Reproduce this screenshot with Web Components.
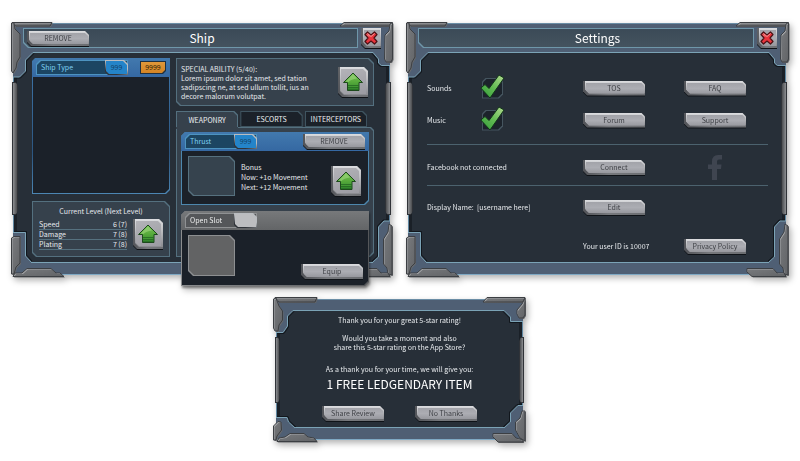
<!DOCTYPE html>
<html lang="en">
<head>
<meta charset="utf-8">
<title>Ship console</title>
<style>
  html { background: #fff; }
  body {
    margin: 0;
    padding: 23px 14px 20px 13px;
    font-family: "Noto Sans CJK JP", "Open Sans", sans-serif;
    font-size: 7px;
    line-height: 9px;
    color: #e6e9ec;
  }
</style>
</head>
<body>
<app-screen></app-screen>

<script>
const base = `
  *, *::before, *::after { box-sizing: border-box; }
  h2, h3, p, dl { margin: 0; font: inherit; }
  button { font: inherit; color: inherit; border: 0; background: none; padding: 0; margin: 0; cursor: pointer; }
`;
const cut = `polygon(var(--tl,0px) 0, calc(100% - var(--tr,0px)) 0, 100% var(--tr,0px), 100% calc(100% - var(--br,0px)), calc(100% - var(--br,0px)) 100%, var(--bl,0px) 100%, 0 calc(100% - var(--bl,0px)), 0 var(--tl,0px))`;

function define(name, css, html) {
  customElements.define(name, class extends HTMLElement {
    constructor() {
      super();
      this.attachShadow({ mode: 'open' }).innerHTML =
        `<style>${base}${css}</style>` + (typeof html === 'function' ? html(this) : html);
    }
  });
}

/* Panel with chamfered corners: --tl --tr --br --bl, --edge, --fill */
define('bevel-panel', `
  :host { display: block; position: relative; isolation: isolate; min-width: 0;
    --tl: 0px; --tr: 0px; --br: 0px; --bl: 0px; --edge: #54707f; --fill: #36414c; }
  :host::before, :host::after { content: ""; position: absolute; z-index: -1; clip-path: ${cut}; }
  :host::before { inset: 0; background: var(--edge); }
  :host::after { inset: 1px; background: var(--fill); }
`, '<slot></slot>');

/* Metal push button; the default slot takes a text or an icon */
define('metal-button', `
  :host { display: block; width: 62px; height: 15px; flex: none; }
  :host([square]) { width: 30px; height: 30px; }
  :host([close]) { width: 20px; height: 20px; }
  button {
    position: relative; isolation: isolate; width: 100%; height: 100%;
    display: grid; place-items: center; color: #3c3e43; white-space: nowrap;
    filter: drop-shadow(0 1px 0 #0f1318);
  }
  .rim, .lit, .face { position: absolute; z-index: -1; clip-path: ${cut}; --tl: 0px; --br: 0px; --tr: 4px; --bl: 4px; }
  .rim { inset: 0; background: linear-gradient(80deg, #505257, #77797d 40%, #6a6c70); }
  .lit { inset: 0 0 2px 2px; background: linear-gradient(#dcdde0, #c6c7ca 30%, #8a8b90); }
  .face { inset: 2px 1px 2px 3px; background: linear-gradient(#a2a3a9, #acadb3 50%, #97989e); --tr: 3px; --bl: 3px; }
  :host([square]) .face { background: linear-gradient(160deg, #b3b3b8, #9b9ba2); inset: 2px 2px 3px 3px; }
  :host([close]) .rim, :host([close]) .lit, :host([close]) .face { --tr: 0px; }
`, el => `<button type="button" aria-label="${el.getAttribute('label') || ''}"><span class="rim"></span><span class="lit"></span><span class="face"></span><slot></slot></button>`
  .replace(' aria-label=""', ''));

define('arrow-icon', `
  :host { display: block; width: 22px; height: 20px; }
  svg { display: block; }
`, `<svg width="22" height="20" viewBox="0 0 22 20">
  <defs><linearGradient id="g" x1="0" y1="0" x2="0" y2="1"><stop offset="0" stop-color="#7ac25a"/><stop offset=".5" stop-color="#58ab3c"/><stop offset="1" stop-color="#2f8a2c"/></linearGradient></defs>
  <path d="M11 1 20.5 10.5H17V18.5H5.500V10.500H1.500Z" fill="url(#g)" stroke="#1d4a1c" stroke-linejoin="round"/>
  <path d="M6 13.500H16.500M6 15.500H16.500M6 17.300H16.500" stroke="#1f5f20" stroke-width=".7"/>
  <path d="M3.500 9.500 11 2.500 15 6.500Q9 7 6.500 10Z" fill="#9ed67f" opacity=".6"/>
</svg>`);

define('close-icon', `
  :host { display: block; width: 14px; height: 14px; }
  svg { display: block; }
`, `<svg width="14" height="14" viewBox="0 0 14 14">
  <path d="M3.500 1 7 4 10.500 1 13 3.500 10 7 13 10.500 10.500 13 7 10 3.500 13 1 10.500 4 7 1 3.500Z" fill="#e8343c" stroke="#4d1216" stroke-width="1.200" stroke-linejoin="round"/>
  <path d="M3.500 2.500 7 5.500 10.500 2.500M3 3.500 5 5.500" fill="none" stroke="#f79a9a" stroke-width="1"/>
</svg>`);

/* Window frame: armoured corners, side rails, optional title bar */
const metal = pts => pts.map(p => `<polygon points="${p}" fill="#a3a5a8"/>
  <polygon points="${p}" fill="url(#m)" transform="translate(1 1)"/><polygon points="${p}" fill="none" stroke="#3c3f43"/>`).join('');
const corner = (cls, line, close, plates) => `<svg class="corner ${cls}" width="1" height="1" aria-hidden="true">
  <defs><linearGradient id="m" x1="0" y1="0" x2="1" y2="1"><stop offset="0" stop-color="#77797c"/><stop offset="1" stop-color="#606265"/></linearGradient></defs>
  <polygon points="${line} ${close}" fill="#4f5f74"/>
  <polyline points="${line}" fill="none" stroke="#11161c" transform="translate(${cls[1] === 'l' ? 1 : -1} ${cls[0] === 't' ? 1 : -1})"/>
  <polyline points="${line}" fill="none" stroke="#7ba3b6"/>
  ${metal(plates)}</svg>`;
const large = [
  corner('tl', '20,29.5 12.500,37 12.500,48 6.500,54 0,54', '0,27 20,27', ['-1,-.5 39,-.5 37,3 3,3', '-1.500,0 1,0 2,6 7,11 7,34 4,39 3,45 0,50 -1.500,48']),
  corner('tr', '-17,29.5 -11.500,36 -11.500,40 -8.500,42.500 0,42.500', '0,27 -17,27', ['-50,3 -46,-.5 2,-.5 0,3', '2.500,-.5 0,1 -1,8 -5,12 -5.500,36 -4,39 1,39 2.500,36']),
  corner('bl', '0,-42.500 12.500,-42.500 12.500,-19 18,-13', '18,-11 0,-11', ['-1.500,-37 1,-38.500 7,-38.500 7,-12 3,-8 1,-1 -1.500,-1', '0,1.500 2,-2 9,-2 14,-6.500 38,-6.500 43,-2 47,-2 51,1.500']),
  corner('br', '0,-54 -6,-54 -11.500,-48 -11.500,-18 -17,-13', '-17,-11 0,-11', ['-1,-51 2,-49 2,0 -2,-1 -3,-7 -6.500,-11 -6.500,-36 -2,-43', '-39,-6.500 -13,-6.500 -9,-2 -2,-2 0,1.500 -34,1.500 -39,-3'])
].join('');
const small = [
  corner('tl', '17,11.500 11.500,17 11.500,27 7,33.500 0,33.500', '0,9 17,9', ['-1,-1.500 41,-1.500 39,3 3,3', '-2.500,0 0,-1 3,7 6.500,12 6.500,21 3,26 2,32 -1,32 -2.500,29']),
  corner('tr', '-19,11.500 -12.500,18 -12.500,22.500 0,22.500', '0,9 -19,9', ['-40,3 -36,-1.500 2,-1.500 0,3', '2,-1 2,16 0,19 -4,19 -6,15 -6,11 -1,5']),
  corner('bl', '0,-22.500 11,-22.500 12.500,-18 19,-12', '19,-10 0,-10', ['-2.500,-14 2,-18.500 5,-18 5.500,-10 1,-4 0,0 -2.500,0', '1,1.500 3,-2 9,-3 14,-6.500 28,-6.500 32,-3 38,-2 41,1.500']),
  corner('br', '0,-34.500 -5,-34.500 -12.500,-27 -12.500,-18 -19,-12', '-19,-10 0,-10', ['2,-29 2,1 -3,-2 -7.500,-10 -7.500,-18 -3,-22 -1,-29', '-30,-6.500 -11,-6.500 -7,-2 0,0 0,2 -25,2 -30,-3'])
].join('');

define('armor-frame', `
  :host { display: grid; grid-template-rows: auto 1fr auto; position: relative; min-width: 0;
    background: #272f38; filter: drop-shadow(2px 3px 3px rgba(0,0,0,.3)); }
  header, .cap, .foot { background: #4f5f74; }
  header { display: grid; grid-template: 20px / minmax(0, 1fr) 20px; column-gap: 3px; padding: 4px 9px 4px 10px;
    border-top: 1px solid #6b8ea6; border-bottom: 1px solid #7ba3b6; height: 30px; }
  .bar { grid-area: 1 / 1; --bl: 5px; --edge: #6f97aa; --fill: linear-gradient(#3b4a57, #44535f); padding: 3px 4px 2px; }
  h2 { grid-area: 1 / 1 / 2 / 3; place-self: center; font-size: 12px; line-height: 20px; color: #fff; z-index: 1; pointer-events: none; }
  header > metal-button { grid-area: 1 / 2; }
  .cap { height: 12px; border-top: 1px solid #6b8ea6; border-bottom: 1px solid #7ba3b6; }
  .foot { height: 13px; border-top: 1px solid #7ba3b6; border-bottom: 1px solid #7fa9c4; }
  main { position: relative; z-index: 2; display: grid; min-width: 0; }
  .edge { position: absolute; inset: 0; border: solid #5f86a0; border-width: 0 1px; box-shadow: inset 3px 0 0 #1a2027, inset -3px 0 0 #1a2027; z-index: 0; }
  header, .cap, .foot { position: relative; z-index: 1; }
  .corner { position: absolute; overflow: visible; z-index: 1; }
  .tl { left: 0; top: 0; } .tr { right: -1px; top: 0; }
  .bl { left: 0; bottom: -1px; } .br { right: -1px; bottom: -1px; }
  .rail { position: absolute; z-index: 1; width: 6px; top: 59px; bottom: 60px; border: 1px solid #303338;
    background: linear-gradient(90deg, #8d8f92, #6b6d70 50%, #4b4d50); clip-path: polygon(0 0, 60% 0, 100% 4px, 100% calc(100% - 4px), 60% 100%, 0 100%); }
  .rail.l { left: -1px; } .rail.r { right: -1px; transform: scaleX(-1); }
  :host([compact]) .rail { top: 38px; bottom: 37px; width: 5px; }
`, el => {
  const compact = el.hasAttribute('compact');
  const top = compact ? '<div class="cap"></div>' : `<header>
    <bevel-panel class="bar"><slot name="action"></slot></bevel-panel>
    <h2>${el.getAttribute('heading')}</h2>
    <metal-button close label="Close"><close-icon></close-icon></metal-button></header>`;
  return `<div class="edge"></div>${top}<main><slot></slot></main><div class="foot"></div>
    ${compact ? small : large}<div class="rail l"></div><div class="rail r"></div>`;
});

/* Coloured strip with a name plate, a count badge, and trailing content */
define('card-head', `
  :host { display: flex; align-items: center; justify-content: space-between; height: 19px; padding: 0 4px;
    background: var(--strip, linear-gradient(#4279ae, #3568a2)); clip-path: polygon(4px 0, 100% 0, 100% 100%, 0 100%, 0 4px); }
  .plate { --tl: 4px; --edge: var(--plate-edge, #4d93c0); --fill: var(--plate, #1c4562); display: flex; align-items: stretch;
    justify-content: space-between; width: var(--plate-width, 72px); height: 15px; }
  .name { padding-left: 5px; line-height: 15px; color: var(--name, #7ed0f2); }
  .badge { width: 23px; --tr: 4px; --bl: 3px; --edge: linear-gradient(20deg, #30343a 20%, #b9bcc0 60%); --fill: var(--badge, #2484c9);
    text-align: center; line-height: 15px; color: #123f66; }
`, el => `<bevel-panel class="plate"><span class="name">${el.getAttribute('name')}</span><bevel-panel class="badge">${el.getAttribute('count') || ''}</bevel-panel></bevel-panel><slot></slot>`);

define('slot-card', `
  :host { display: block; position: relative; }
  .card { --edge: #4d87ad; --fill: #1b2129; --tl: 4px; --br: 4px; }
  .body { display: flex; gap: 6px; padding: 5px 8px 9px 7px; }
  .pic { width: 47px; height: 40px; flex: none; --tr: 5px; --bl: 5px; --edge: #56717f; --fill: #36434e; }
  .rest { flex: 1; display: flex; justify-content: space-between; align-items: flex-end; min-width: 0; }
  :host([empty]) { filter: drop-shadow(1px 2px 1px rgba(0,0,0,.4)); }
  :host([empty]) .card { --edge: linear-gradient(90deg, #8b8d8f, #55575a); }
  :host([empty]) .body { padding: 5px 6px 10px 7px; }
  :host([empty]) .pic { height: 41px; --edge: #8d8f91; --fill: #626364; }
  :host([empty]) card-head { --strip: linear-gradient(#77797b, #636567); --plate: #55575a; --plate-edge: #8f9193; --badge: #bcbdc0; --name: #eceded; }
  :host([empty]) .rest { align-items: flex-end; justify-content: flex-end; margin-bottom: -3px; }
`, el => `<bevel-panel class="card"><card-head name="${el.getAttribute('name')}" count="${el.getAttribute('count') || ''}"><slot name="action"></slot></card-head>
  <div class="body"><bevel-panel class="pic"></bevel-panel><div class="rest"><slot></slot></div></div></bevel-panel>`);

define('ship-view', `
  :host { display: grid; grid-template-columns: 138fr 198fr; gap: 6px; padding: 5px 16px 5px 19px; min-width: 0; }
  .col { display: flex; flex-direction: column; min-width: 0; }
  .list { flex: 1; --edge: linear-gradient(#3f77ab, #2c5680 70%, #4c86b3); --fill: #1b2129; --br: 4px; --tl: 3px; }
  .list card-head { --plate-width: 92px; }
  .cost { --edge: #20303e; --fill: linear-gradient(#e0983a, #d48424); --br: 3px; width: 26px; height: 13px; text-align: center; line-height: 13px; color: #2a1a05; }
  .level { margin-top: 7px; height: 56px; --bl: 4px; --tr: 5px; padding: 5px 7px 0; }
  .level h3 { text-align: center; line-height: 10px; }
  .stats { display: flex; justify-content: space-between; gap: 6px; padding-top: 3px; }
  table { flex: 1; border-collapse: collapse; height: 30px; }
  th, td { padding: 0; font-weight: 400; text-align: left; line-height: 8px; height: 10px; border-bottom: 1px solid #56717f; }
  td { text-align: right; }
  .ability { height: 48px; --tr: 5px; --bl: 4px; display: flex; justify-content: space-between; padding: 6px 6px 0 5px; white-space: nowrap; }
  .ability h3 { line-height: 10px; }
  .ability metal-button { margin-top: 3px; }
  .tabs { display: grid; grid-template-columns: repeat(3, 1fr); gap: 2px; margin: 5px 7px 0 0; height: 16px; position: relative; z-index: 1; }
  .tab { --tr: 4px; --fill: #1b2129; --edge: #3f5460; height: 16px; }
  .tab button { width: 100%; height: 100%; color: #eef0f2; white-space: nowrap; }
  .tab.on { --fill: #36414c; --edge: linear-gradient(#54707f 90%, #36414c 90%); height: 18px; }
  .deck { flex: 1; display: flex; flex-direction: column; gap: 6px; padding: 5px; --br: 4px; --tr: 3px; }
  slot-card.over { margin-bottom: -34px; z-index: 2; }
  .bonus { line-height: 10px; white-space: nowrap; margin-bottom: 4px; }
`, `
  <div class="col">
    <bevel-panel class="list"><card-head name="Ship Type" count="999"><bevel-panel class="cost">9999</bevel-panel></card-head></bevel-panel>
    <bevel-panel class="level"><h3>Current Level (Next Level)</h3>
      <div class="stats"><table>
        <tr><th scope="row">Speed</th><td>6 (7)</td></tr>
        <tr><th scope="row">Damage</th><td>7 (8)</td></tr>
        <tr><th scope="row">Plating</th><td>7 (8)</td></tr>
      </table><metal-button square label="Upgrade level"><arrow-icon></arrow-icon></metal-button></div>
    </bevel-panel>
  </div>
  <div class="col">
    <bevel-panel class="ability"><div><h3>SPECIAL ABILITY (5/40):</h3>
      <p>Lorem ipsum dolor sit amet, sed tation<br>sadipscing ne, at sed ullum tollit, ius an<br>decore malorum volutpat.</p></div>
      <metal-button square label="Upgrade ability"><arrow-icon></arrow-icon></metal-button></bevel-panel>
    <div class="tabs" role="tablist">
      <bevel-panel class="tab on"><button role="tab" aria-selected="true">WEAPONRY</button></bevel-panel>
      <bevel-panel class="tab"><button role="tab" aria-selected="false">ESCORTS</button></bevel-panel>
      <bevel-panel class="tab"><button role="tab" aria-selected="false">INTERCEPTORS</button></bevel-panel>
    </div>
    <bevel-panel class="deck">
      <slot-card name="Thrust" count="999"><metal-button slot="action">REMOVE</metal-button>
        <div class="bonus"><p>Bonus</p><p>Now: +1o Movement</p><p>Next: +12 Movement</p></div>
        <metal-button square label="Upgrade weapon"><arrow-icon></arrow-icon></metal-button></slot-card>
      <slot-card class="over" empty name="Open Slot"><metal-button>Equip</metal-button></slot-card>
    </bevel-panel>
  </div>`);

define('check-toggle', `
  :host { display: grid; grid-template-columns: subgrid; align-items: center; }
  label { display: contents; }
  .box { position: relative; display: block; width: 21px; height: 21px; --tl: 4px; --tr: 4px; --br: 4px; --edge: #45555f; --fill: #1c232b; }
  input { appearance: none; margin: 0; width: 100%; height: 100%; position: absolute; inset: 0; }
  svg { position: absolute; left: -2px; top: -4px; display: none; pointer-events: none; }
  input:checked + svg { display: block; }
`, el => `<label><span>${el.getAttribute('label')}</span><bevel-panel class="box"><input type="checkbox" checked>
  <svg width="26" height="26" viewBox="0 0 26 26"><defs><linearGradient id="c" x1="1" y1="0" x2="0" y2="1"><stop offset="0" stop-color="#b4dc92"/><stop offset=".5" stop-color="#62bb52"/><stop offset="1" stop-color="#2f9a3a"/></linearGradient></defs>
  <path d="M.8 14 5 10.500 9 14.500 19 1 24 4 10 24Z" fill="url(#c)" stroke="#12351a" stroke-linejoin="round"/></svg></bevel-panel></label>`);

define('settings-view', `
  :host { display: block; padding: 19px 18px 0 19px; min-width: 0; }
  .row { display: grid; grid-template-columns: 55fr 101fr 101fr 84fr; align-items: center; height: 32px; white-space: nowrap; }
  check-toggle { grid-column: 1 / 3; }
  .wide { grid-column: 1 / 3; }
  .link { height: 41px; padding-top: 5px; margin-top: 8px; border-top: 1px solid #4c626e; }
  .name { height: 44px; border-top: 1px solid #4c626e; }
  .id { height: 33px; padding-top: 2px; }
  .id p { grid-column: 3; }
  .fb { margin-left: 24px; display: block; }
`, `
  <div class="row"><check-toggle label="Sounds"></check-toggle><metal-button>TOS</metal-button><metal-button>FAQ</metal-button></div>
  <div class="row"><check-toggle label="Music"></check-toggle><metal-button>Forum</metal-button><metal-button>Support</metal-button></div>
  <div class="row link"><span class="wide">Facebook not connected</span><metal-button>Connect</metal-button>
    <svg class="fb" width="14" height="25" viewBox="0 0 14 25" role="img" aria-label="Facebook"><path d="M4 25V14H0V9.500H4V6.500Q4 0 10 0H14V4.500H11Q9 4.500 9 6.500V9.500H13.500L13 14H9V25Z" fill="#3f4550"/></svg></div>
  <div class="row name"><span class="wide">Display Name:&nbsp; [username here]</span><metal-button>Edit</metal-button></div>
  <div class="row id"><p>Your user ID is 10007</p><metal-button>Privacy Policy</metal-button></div>`);

define('rating-view', `
  :host { display: block; text-align: center; padding: 5px 12px 6px; }
  .thanks { margin-bottom: 9px; }
  .gift { margin-top: 13px; }
  .item { font-size: 12px; line-height: 20px; color: #fff; }
  .row { display: flex; justify-content: center; gap: 31px; margin-top: 12px; }
`, `
  <p class="thanks">Thank you for your great 5-star rating!</p>
  <p>Would you take a moment and also<br>share this 5-star rating on the App Store?</p>
  <p class="gift">As a thank you for your time, we will give you:</p>
  <p class="item">1 FREE LEDGENDARY ITEM</p>
  <div class="row"><metal-button>Share Review</metal-button><metal-button>No Thanks</metal-button></div>`);

define('app-screen', `
  :host { display: block; }
  .top { display: grid; grid-template-columns: 377fr 378fr; gap: 18px; }
  .dialog { width: 32%; margin: 24px auto 0; }
`, `
  <div class="top">
    <armor-frame heading="Ship"><metal-button slot="action">REMOVE</metal-button><ship-view></ship-view></armor-frame>
    <armor-frame heading="Settings"><settings-view></settings-view></armor-frame>
  </div>
  <armor-frame class="dialog" compact><rating-view></rating-view></armor-frame>`);
</script>
</body>
</html>
